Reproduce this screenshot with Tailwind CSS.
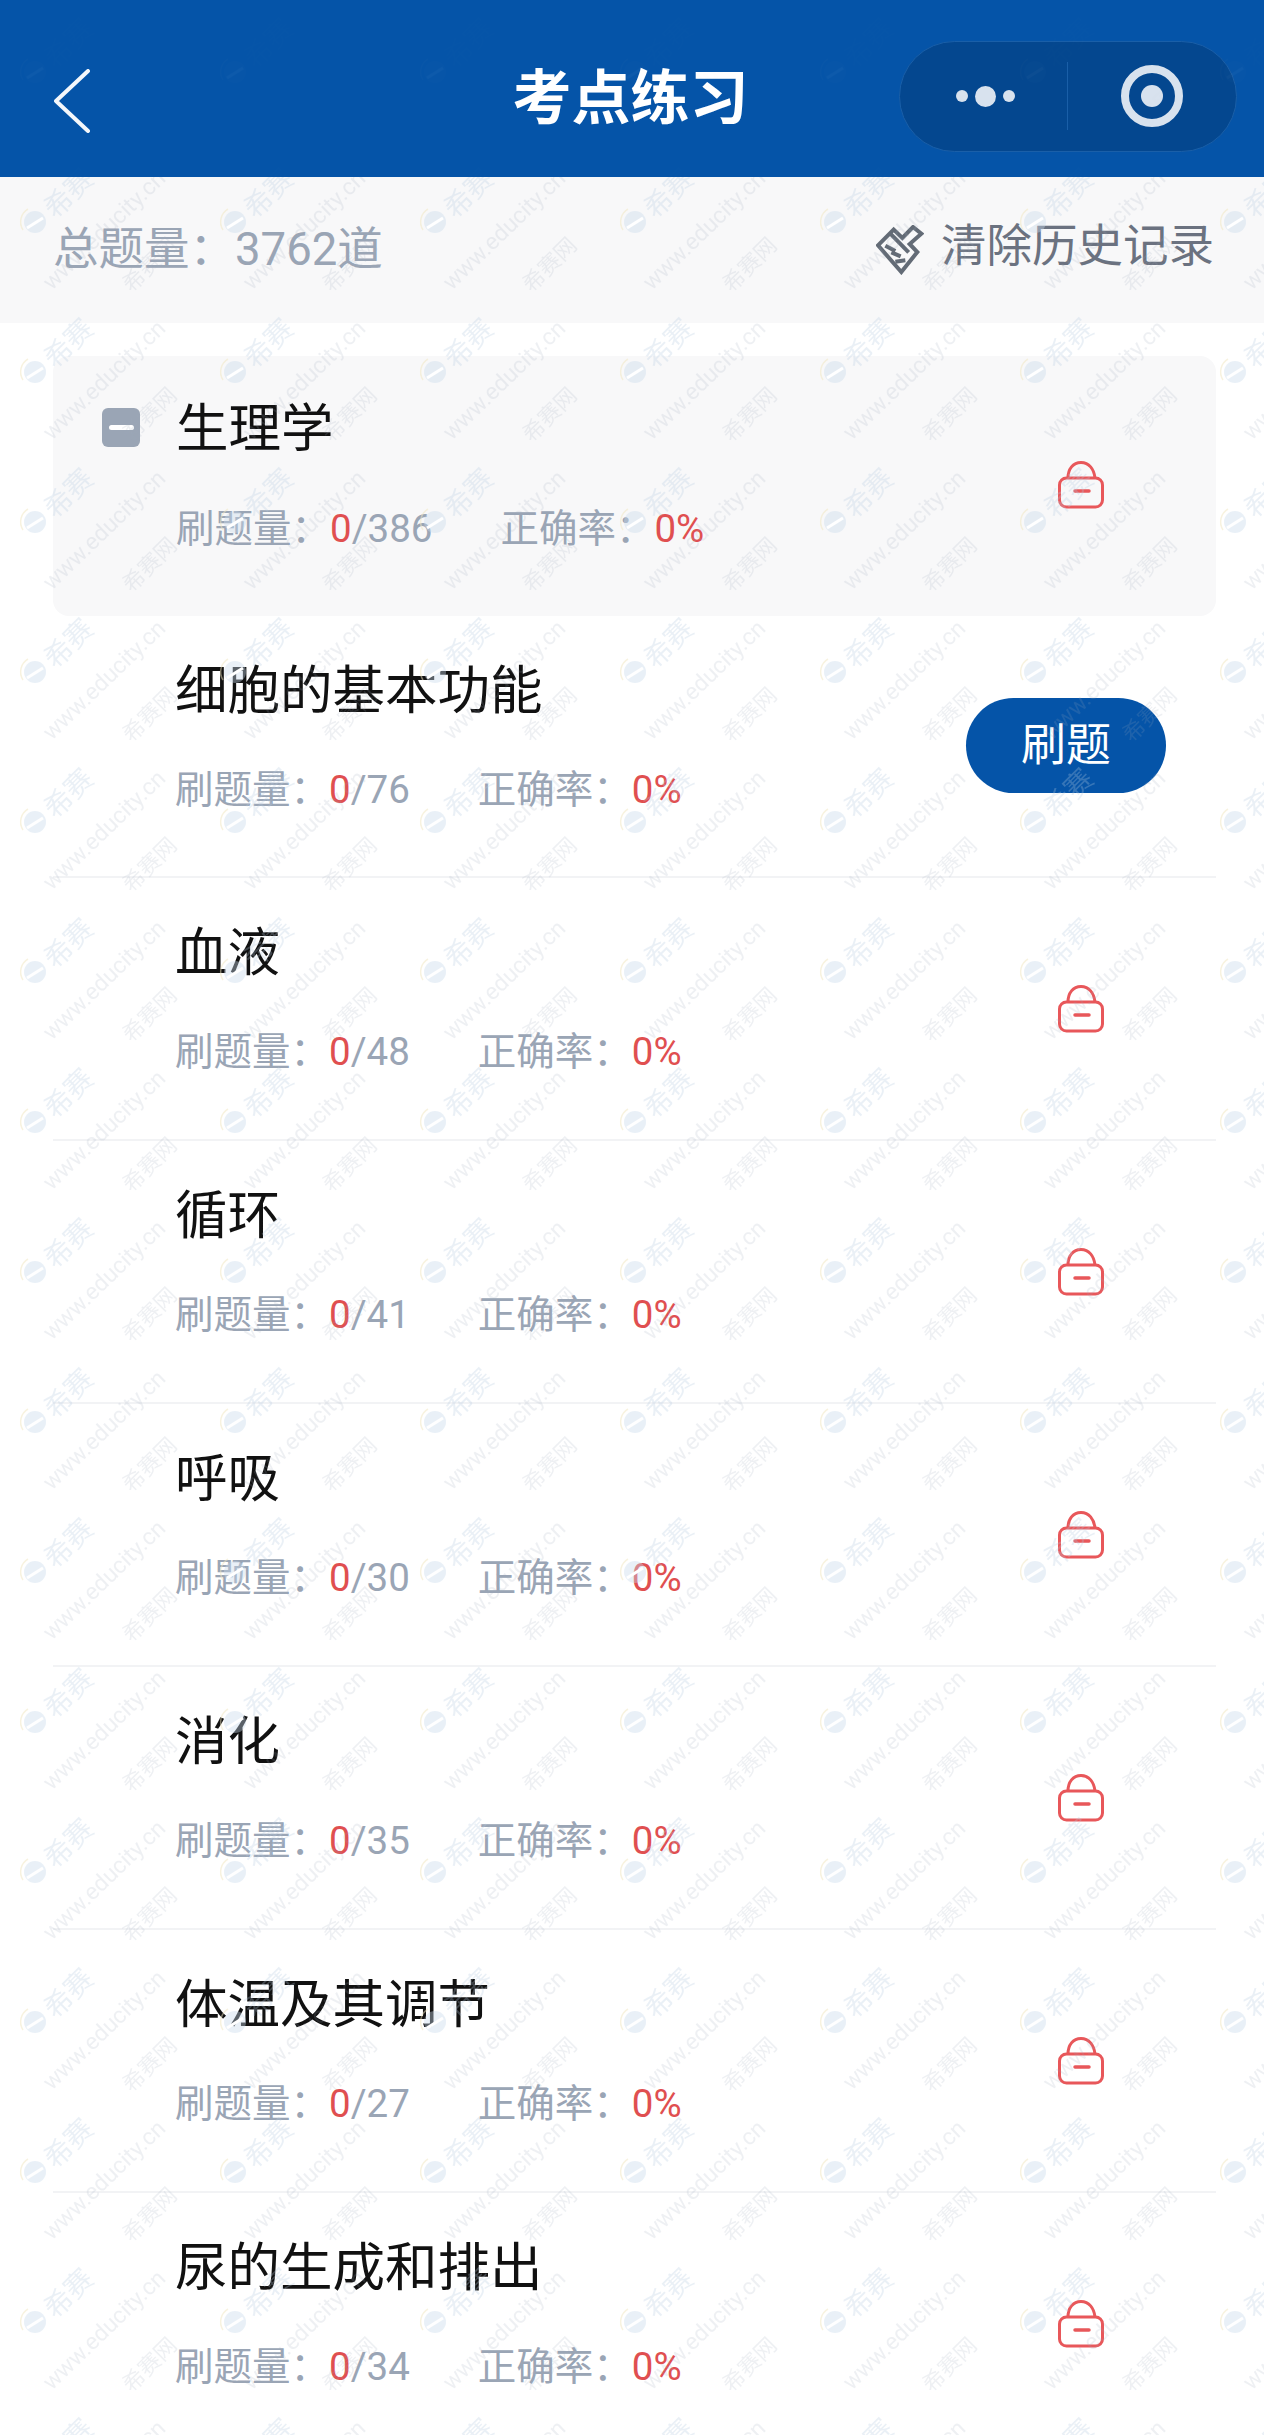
<!DOCTYPE html>
<html lang="zh">
<head>
<meta charset="utf-8">
<script src="https://cdn.jsdelivr.net/npm/@tailwindcss/browser@4"></script>
</head>
<body class="bg-white">
<div class="relative w-[1264px] h-[2435px] overflow-hidden bg-white font-['Roboto','Noto_Sans_CJK_SC',sans-serif]">

  <header class="relative z-20 h-[177px] bg-[#0554a8] flex items-center pl-[54px] pr-[27px] overflow-hidden">
    <svg class="w-[36px] h-[64px] mt-[25px] shrink-0" viewBox="0 0 36 64" fill="none" stroke="#f4f7fb" stroke-width="4" stroke-linecap="round" stroke-linejoin="round"><path d="M34 2 L2 32 L34 62"/></svg>
    <h1 class="absolute left-0 right-[3px] top-[66px] text-center text-[59px] leading-[66px] font-bold text-white">考点练习</h1>
    <div class="ml-auto mt-[15px] w-[338px] h-[111px] rounded-full bg-[#04478f] border border-[#1a5fa8] flex items-center">
      <div class="w-[168px] h-[68px] border-r-[1px] border-[#1a5fa8] flex items-center justify-center gap-[7px] pl-[3px]">
        <span class="w-[12px] h-[12px] rounded-full bg-[#d8e2ee]"></span>
        <span class="w-[21px] h-[21px] rounded-full bg-[#d8e2ee]"></span>
        <span class="w-[12px] h-[12px] rounded-full bg-[#d8e2ee]"></span>
      </div>
      <div class="flex-1 flex items-center justify-center">
        <span class="w-[62px] h-[62px] rounded-full border-[8px] border-[#d8e2ee] flex items-center justify-center">
          <span class="w-[22px] h-[22px] rounded-full bg-[#d8e2ee]"></span>
        </span>
      </div>
    </div>
    <svg class="absolute inset-0 w-full h-full opacity-[.03]" aria-hidden="true"><rect width="1264" height="177" fill="url(#wm)"/></svg>
  </header>

  <div class="h-[146px] bg-[#f8f8f9] flex items-start justify-between pl-[53px] pr-[50px]">
    <div class="mt-[45px] text-[45.5px] leading-[56px] text-[#9aa5b5]">总题量：3762道</div>
    <div class="mt-[41px] flex items-center gap-[17px] text-[45.5px] leading-[56px] text-[#6b7280]">
      <svg class="w-[48px] h-[50px] mt-[7px]" viewBox="54 46 144 150" fill="none" stroke="#636b76" stroke-width="12" stroke-linejoin="miter">
        <path d="M60 107 L107 60 L133 85 L165 52 L190 72 L155 103 L178 127 L130 187 Z"/>
        <path d="M97 72 L152 128"/>
        <path d="M82 108 L112 124 M100 128 L128 140 M112 156 L142 152"/>
      </svg>
      <span>清除历史记录</span>
    </div>
  </div>

  <main class="pl-[53px] pr-[48px] pt-[33px]">
    <section class="h-[260px] rounded-[16px] bg-[#f8f8f9] flex items-start relative">
      <span class="mt-[52px] ml-[49px] w-[38px] h-[39px] rounded-[6px] bg-[#9aa5b5] flex items-center justify-center"><span class="w-[25px] h-[5px] rounded-full bg-white"></span></span>
      <div class="ml-[36px] flex-1">
        <h2 class="mt-[42px] text-[52.5px] leading-[62px] text-[#111]">生理学</h2>
        <p class="mt-[44px] text-[38.5px] leading-[50px] text-[#9aa5b5]">刷题量：<span class="text-[#e04f50]">0</span>/386<span class="ml-[68px]">正确率：</span><span class="text-[#e04f50]">0%</span></p>
      </div>
      <svg class="mt-[105px] mr-[112px] w-[46px] h-[48px]" viewBox="0 0 46 48" fill="none" stroke="#e8575a" stroke-width="3"><rect x="1.5" y="17" width="43" height="29" rx="7"/><path d="M10 17 C10 8 15 1.5 23 1.5 C31 1.5 36 8 37 17"/><path d="M17 30 H31" stroke-width="3.5" stroke-linecap="round"/></svg>
    </section>

    <section class="h-[262px] border-b-2 border-[#f2f3f5] flex items-start">
      <div class="ml-[122px] flex-1">
        <h2 class="mt-[44px] text-[52.5px] leading-[62px] text-[#111]">细胞的基本功能</h2>
        <p class="mt-[43px] text-[38.5px] leading-[50px] text-[#9aa5b5]">刷题量：<span class="text-[#e04f50]">0</span>/76<span class="ml-[68px]">正确率：</span><span class="text-[#e04f50]">0%</span></p>
      </div>
      <button class="mt-[82px] mr-[50px] w-[200px] h-[95px] rounded-full bg-[#0554a8] text-white text-[45px]">刷题</button>
    </section>

    <section class="h-[263px] border-b-2 border-[#f2f3f5] flex items-start">
      <div class="ml-[122px] flex-1">
        <h2 class="mt-[44px] text-[52.5px] leading-[62px] text-[#111]">血液</h2>
        <p class="mt-[43px] text-[38.5px] leading-[50px] text-[#9aa5b5]">刷题量：<span class="text-[#e04f50]">0</span>/48<span class="ml-[68px]">正确率：</span><span class="text-[#e04f50]">0%</span></p>
      </div>
      <svg class="mt-[107px] mr-[112px] w-[46px] h-[48px]" viewBox="0 0 46 48" fill="none" stroke="#e8575a" stroke-width="3"><rect x="1.5" y="17" width="43" height="29" rx="7"/><path d="M10 17 C10 8 15 1.5 23 1.5 C31 1.5 36 8 37 17"/><path d="M17 30 H31" stroke-width="3.5" stroke-linecap="round"/></svg>
    </section>

    <section class="h-[263px] border-b-2 border-[#f2f3f5] flex items-start">
      <div class="ml-[122px] flex-1">
        <h2 class="mt-[44px] text-[52.5px] leading-[62px] text-[#111]">循环</h2>
        <p class="mt-[43px] text-[38.5px] leading-[50px] text-[#9aa5b5]">刷题量：<span class="text-[#e04f50]">0</span>/41<span class="ml-[68px]">正确率：</span><span class="text-[#e04f50]">0%</span></p>
      </div>
      <svg class="mt-[107px] mr-[112px] w-[46px] h-[48px]" viewBox="0 0 46 48" fill="none" stroke="#e8575a" stroke-width="3"><rect x="1.5" y="17" width="43" height="29" rx="7"/><path d="M10 17 C10 8 15 1.5 23 1.5 C31 1.5 36 8 37 17"/><path d="M17 30 H31" stroke-width="3.5" stroke-linecap="round"/></svg>
    </section>

    <section class="h-[263px] border-b-2 border-[#f2f3f5] flex items-start">
      <div class="ml-[122px] flex-1">
        <h2 class="mt-[44px] text-[52.5px] leading-[62px] text-[#111]">呼吸</h2>
        <p class="mt-[43px] text-[38.5px] leading-[50px] text-[#9aa5b5]">刷题量：<span class="text-[#e04f50]">0</span>/30<span class="ml-[68px]">正确率：</span><span class="text-[#e04f50]">0%</span></p>
      </div>
      <svg class="mt-[107px] mr-[112px] w-[46px] h-[48px]" viewBox="0 0 46 48" fill="none" stroke="#e8575a" stroke-width="3"><rect x="1.5" y="17" width="43" height="29" rx="7"/><path d="M10 17 C10 8 15 1.5 23 1.5 C31 1.5 36 8 37 17"/><path d="M17 30 H31" stroke-width="3.5" stroke-linecap="round"/></svg>
    </section>

    <section class="h-[263px] border-b-2 border-[#f2f3f5] flex items-start">
      <div class="ml-[122px] flex-1">
        <h2 class="mt-[44px] text-[52.5px] leading-[62px] text-[#111]">消化</h2>
        <p class="mt-[43px] text-[38.5px] leading-[50px] text-[#9aa5b5]">刷题量：<span class="text-[#e04f50]">0</span>/35<span class="ml-[68px]">正确率：</span><span class="text-[#e04f50]">0%</span></p>
      </div>
      <svg class="mt-[107px] mr-[112px] w-[46px] h-[48px]" viewBox="0 0 46 48" fill="none" stroke="#e8575a" stroke-width="3"><rect x="1.5" y="17" width="43" height="29" rx="7"/><path d="M10 17 C10 8 15 1.5 23 1.5 C31 1.5 36 8 37 17"/><path d="M17 30 H31" stroke-width="3.5" stroke-linecap="round"/></svg>
    </section>

    <section class="h-[263px] border-b-2 border-[#f2f3f5] flex items-start">
      <div class="ml-[122px] flex-1">
        <h2 class="mt-[44px] text-[52.5px] leading-[62px] text-[#111]">体温及其调节</h2>
        <p class="mt-[43px] text-[38.5px] leading-[50px] text-[#9aa5b5]">刷题量：<span class="text-[#e04f50]">0</span>/27<span class="ml-[68px]">正确率：</span><span class="text-[#e04f50]">0%</span></p>
      </div>
      <svg class="mt-[107px] mr-[112px] w-[46px] h-[48px]" viewBox="0 0 46 48" fill="none" stroke="#e8575a" stroke-width="3"><rect x="1.5" y="17" width="43" height="29" rx="7"/><path d="M10 17 C10 8 15 1.5 23 1.5 C31 1.5 36 8 37 17"/><path d="M17 30 H31" stroke-width="3.5" stroke-linecap="round"/></svg>
    </section>

    <section class="h-[263px] flex items-start">
      <div class="ml-[122px] flex-1">
        <h2 class="mt-[44px] text-[52.5px] leading-[62px] text-[#111]">尿的生成和排出</h2>
        <p class="mt-[43px] text-[38.5px] leading-[50px] text-[#9aa5b5]">刷题量：<span class="text-[#e04f50]">0</span>/34<span class="ml-[68px]">正确率：</span><span class="text-[#e04f50]">0%</span></p>
      </div>
      <svg class="mt-[107px] mr-[112px] w-[46px] h-[48px]" viewBox="0 0 46 48" fill="none" stroke="#e8575a" stroke-width="3"><rect x="1.5" y="17" width="43" height="29" rx="7"/><path d="M10 17 C10 8 15 1.5 23 1.5 C31 1.5 36 8 37 17"/><path d="M17 30 H31" stroke-width="3.5" stroke-linecap="round"/></svg>
    </section>
  </main>

  <svg class="absolute inset-0 z-10 w-full h-full pointer-events-none" aria-hidden="true">
    <defs>
      <pattern id="wm" width="200" height="150" patternUnits="userSpaceOnUse">
        <g font-family="'Noto Sans CJK SC',sans-serif">
          <circle cx="35" cy="72" r="11" fill="#c9d9ea" opacity=".4"/>
          <path d="M27 78 L43 68" stroke="#fff" stroke-width="3"/>
          <path d="M23 80 A15 15 0 0 1 28 59" fill="none" stroke="#f0e6c0" stroke-width="1.5" opacity=".5"/>
          <text transform="translate(67 42) rotate(-45)" text-anchor="middle" dominant-baseline="central" font-size="28" fill="#b3c9df" opacity=".28">希赛</text>
          <text transform="translate(104 80) rotate(-44)" text-anchor="middle" dominant-baseline="central" font-size="23" font-family="Roboto,sans-serif" fill="#9aa8b8" opacity=".17">www.educity.cn</text>
          <text transform="translate(148 113) rotate(-45)" text-anchor="middle" dominant-baseline="central" font-size="22" fill="#9aa8b8" opacity=".17">希赛网</text>
        </g>
      </pattern>
    </defs>
    <rect width="1264" height="2435" fill="url(#wm)"/>
  </svg>
</div>
</body>
</html>
